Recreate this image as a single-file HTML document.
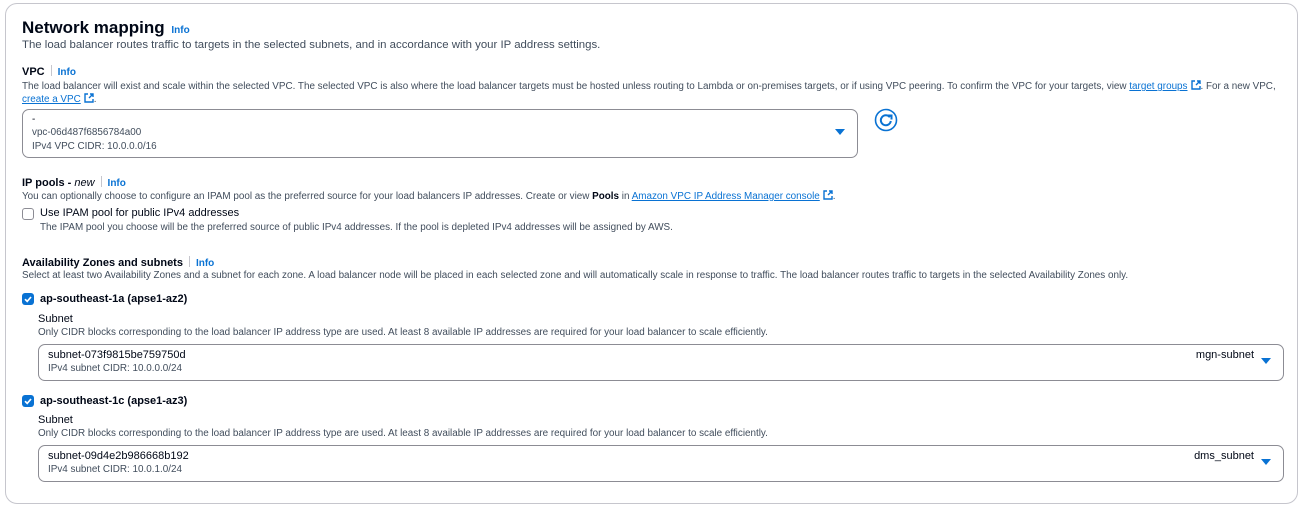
<!DOCTYPE html>
<html><head><meta charset="utf-8"><style>
*{margin:0;padding:0;box-sizing:border-box}
body{width:1303px;height:507px;background:#fff;font-family:"Liberation Sans",sans-serif;color:#000716;position:relative;overflow:hidden}
.a{position:absolute;white-space:nowrap}
.card{position:absolute;left:5px;top:3px;width:1293px;height:501px;border:1px solid #c6c6cd;border-radius:12px}
.h{font-size:17px;font-weight:bold}
.info{color:#0972d3;font-weight:bold;font-size:10px}
.lab{font-size:11px;font-weight:bold}
.d{font-size:9.9px;color:#414d5c}
.lk{color:#0972d3;text-decoration:underline}
.sel{position:absolute;border:1px solid #8c8c94;border-radius:7px}
.tri{position:absolute;width:0;height:0;border-left:5px solid transparent;border-right:5px solid transparent;border-top:6px solid #0972d3}
.cb{position:absolute;width:12px;height:12px;border-radius:3px}
.sep{display:inline-block;width:1px;height:11px;background:#c6c6cd;margin:0 6px;vertical-align:-1px}
.ext{display:inline-block;width:10px;height:10px;margin-left:3px;vertical-align:-1px}
</style></head><body>
<div class="card"></div>
<div class="a h" style="left:22px;top:18px">Network mapping <span class="info" style="margin-left:2px">Info</span></div>
<div class="a" style="left:22px;top:39px;font-size:11.4px;color:#414d5c">The load balancer routes traffic to targets in the selected subnets, and in accordance with your IP address settings.</div>

<div class="a lab" style="left:22px;top:65px">VPC<span class="sep"></span><span class="info">Info</span></div>
<div class="a d" style="left:22px;top:80px">The load balancer will exist and scale within the selected VPC. The selected VPC is also where the load balancer targets must be hosted unless routing to Lambda or on-premises targets, or if using VPC peering. To confirm the VPC for your targets, view <span class="lk">target groups</span><svg class="ext" viewBox="0 0 10 10"><path d="M4 1H1v8h8V6M6 1h3v3M9 1L5 5" fill="none" stroke="#0972d3" stroke-width="1.4"/></svg>. For a new VPC,</div>
<div class="a d" style="left:22px;top:93px"><span class="lk">create a VPC</span><svg class="ext" viewBox="0 0 10 10"><path d="M4 1H1v8h8V6M6 1h3v3M9 1L5 5" fill="none" stroke="#0972d3" stroke-width="1.4"/></svg>.</div>
<div class="sel" style="left:22px;top:109px;width:836px;height:49px"></div>
<div class="a d" style="left:32px;top:114px;color:#000716">-</div>
<div class="a d" style="left:32px;top:127px">vpc-06d487f6856784a00</div>
<div class="a d" style="left:32px;top:141px">IPv4 VPC CIDR: 10.0.0.0/16</div>
<div class="tri" style="left:835px;top:129px"></div>
<svg class="a" style="left:874px;top:108px" width="24" height="24" viewBox="0 0 24 24"><circle cx="12" cy="12" r="10.5" fill="none" stroke="#0972d3" stroke-width="1.6"/><path d="M15.8 9.2A5 5 0 1 0 16.8 13" fill="none" stroke="#0972d3" stroke-width="2"/><path d="M13.5 7.5h4v4" fill="none" stroke="#0972d3" stroke-width="2"/></svg>

<div class="a lab" style="left:22px;top:176px">IP pools - <i style="font-weight:normal">new</i><span class="sep"></span><span class="info">Info</span></div>
<div class="a d" style="left:22px;top:190px">You can optionally choose to configure an IPAM pool as the preferred source for your load balancers IP addresses. Create or view <b style="color:#000716">Pools</b> in <span class="lk">Amazon VPC IP Address Manager console</span><svg class="ext" viewBox="0 0 10 10"><path d="M4 1H1v8h8V6M6 1h3v3M9 1L5 5" fill="none" stroke="#0972d3" stroke-width="1.4"/></svg>.</div>
<div class="cb" style="left:22px;top:208px;border:1.5px solid #8c8c94"></div>
<div class="a" style="left:40px;top:207px;font-size:11px">Use IPAM pool for public IPv4 addresses</div>
<div class="a d" style="left:40px;top:222px">The IPAM pool you choose will be the preferred source of public IPv4 addresses. If the pool is depleted IPv4 addresses will be assigned by AWS.</div>

<div class="a lab" style="left:22px;top:256px">Availability Zones and subnets<span class="sep"></span><span class="info">Info</span></div>
<div class="a d" style="left:22px;top:270px">Select at least two Availability Zones and a subnet for each zone. A load balancer node will be placed in each selected zone and will automatically scale in response to traffic. The load balancer routes traffic to targets in the selected Availability Zones only.</div>

<div class="cb" style="left:22px;top:293px;background:#0972d3"><svg width="12" height="12" viewBox="0 0 12 12" style="position:absolute;left:0;top:0"><path d="M3 6.2l2.2 2.2L9 4" fill="none" stroke="#fff" stroke-width="1.7"/></svg></div>
<div class="a lab" style="left:40px;top:293px">ap-southeast-1a (apse1-az2)</div>
<div class="a" style="left:38px;top:313px;font-size:11px">Subnet</div>
<div class="a d" style="left:38px;top:327px">Only CIDR blocks corresponding to the load balancer IP address type are used. At least 8 available IP addresses are required for your load balancer to scale efficiently.</div>
<div class="sel" style="left:38px;top:344px;width:1246px;height:37px"></div>
<div class="a" style="left:48px;top:349px;font-size:11px">subnet-073f9815be759750d</div>
<div class="a d" style="left:48px;top:363px">IPv4 subnet CIDR: 10.0.0.0/24</div>
<div class="a" style="right:49px;top:349px;font-size:11px">mgn-subnet</div>
<div class="tri" style="left:1261px;top:358px"></div>

<div class="cb" style="left:22px;top:395px;background:#0972d3"><svg width="12" height="12" viewBox="0 0 12 12" style="position:absolute;left:0;top:0"><path d="M3 6.2l2.2 2.2L9 4" fill="none" stroke="#fff" stroke-width="1.7"/></svg></div>
<div class="a lab" style="left:40px;top:395px">ap-southeast-1c (apse1-az3)</div>
<div class="a" style="left:38px;top:414px;font-size:11px">Subnet</div>
<div class="a d" style="left:38px;top:428px">Only CIDR blocks corresponding to the load balancer IP address type are used. At least 8 available IP addresses are required for your load balancer to scale efficiently.</div>
<div class="sel" style="left:38px;top:445px;width:1246px;height:37px"></div>
<div class="a" style="left:48px;top:450px;font-size:11px">subnet-09d4e2b986668b192</div>
<div class="a d" style="left:48px;top:464px">IPv4 subnet CIDR: 10.0.1.0/24</div>
<div class="a" style="right:49px;top:450px;font-size:11px">dms_subnet</div>
<div class="tri" style="left:1261px;top:459px"></div>
</body></html>
